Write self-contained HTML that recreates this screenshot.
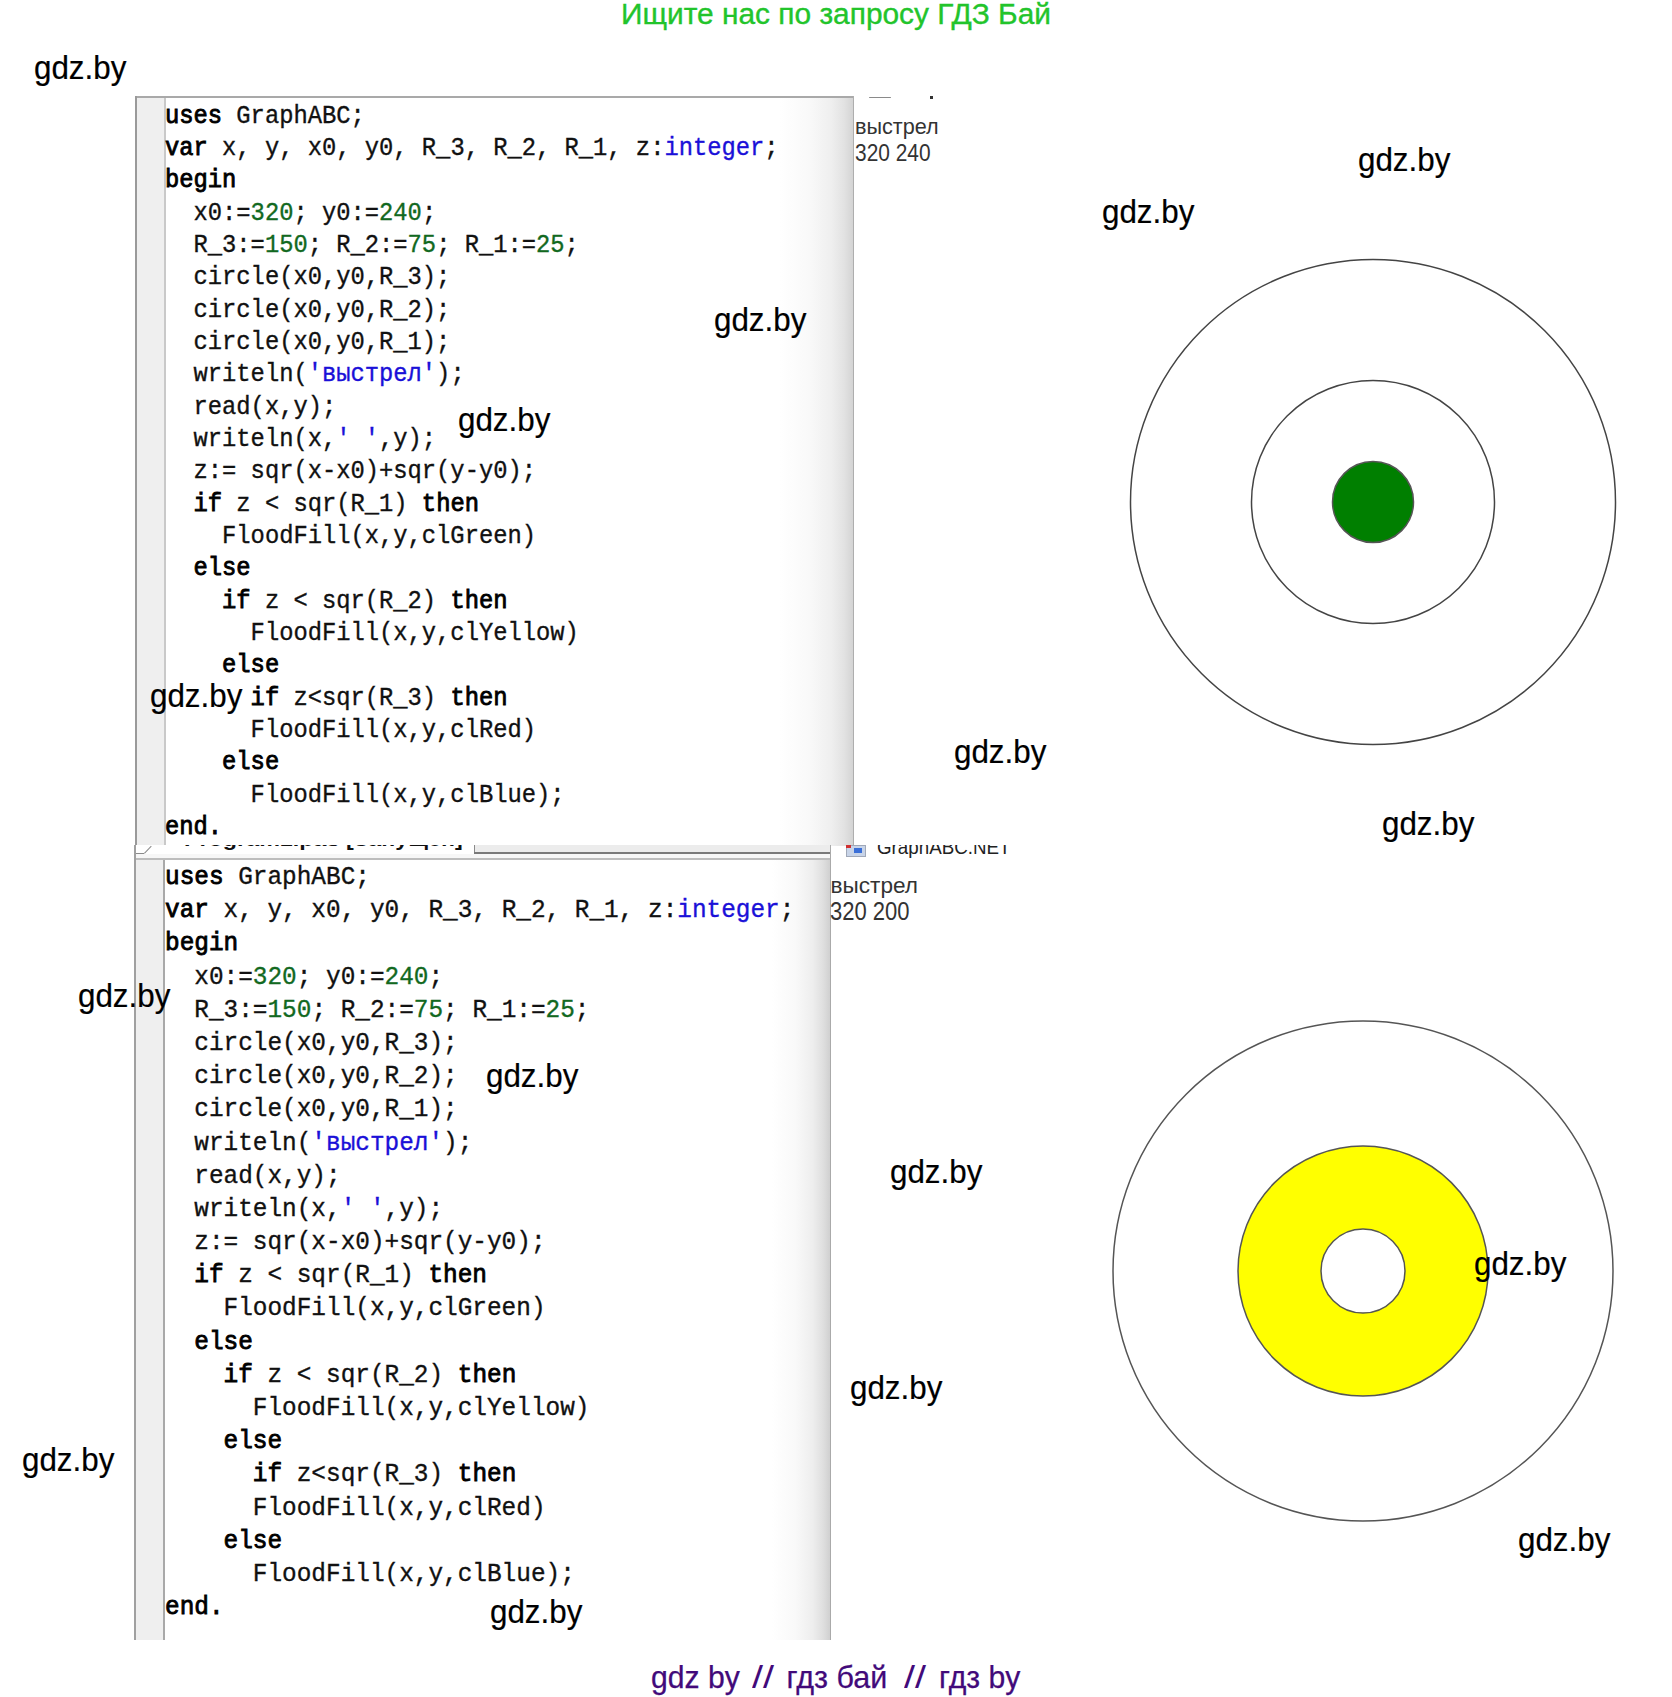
<!DOCTYPE html>
<html><head><meta charset="utf-8">
<style>
html,body{margin:0;padding:0;background:#fff;}
body{width:1672px;height:1697px;position:relative;overflow:hidden;font-family:"Liberation Sans",sans-serif;}
.abs{position:absolute;}
.wm{position:absolute;font-family:"Liberation Sans",sans-serif;font-size:33px;line-height:40px;color:#000;white-space:nowrap;transform-origin:0 0;transform:scaleX(0.95);-webkit-text-stroke:0.2px currentColor;}
.top{position:absolute;left:621px;top:-3.5px;font-size:29px;line-height:34px;color:#22c42b;white-space:nowrap;transform-origin:0 0;transform:scaleX(1.03);-webkit-text-stroke:0.35px currentColor;}
.bot{position:absolute;left:651px;top:1660px;font-size:30.5px;line-height:34px;color:#420a7a;white-space:nowrap;transform-origin:0 0;transform:scaleX(0.988);-webkit-text-stroke:0.25px currentColor;}
.panel{position:absolute;background:#fff;overflow:hidden;}
.gut{position:absolute;background:#efefef;}
.code{position:absolute;font-family:"Liberation Mono",monospace;white-space:normal;color:#111;transform-origin:0 0;-webkit-text-stroke:0.35px currentColor;}
.code b{font-weight:normal;-webkit-text-stroke:0.85px currentColor;color:#000;}
.code div{height:32.35px;white-space:pre;}
.p2 .code div{height:33.2px;}
b{font-weight:bold;}
.n{color:#12691f;}
.s{color:#1a10d8;}
.out{position:absolute;font-family:"Liberation Sans",sans-serif;color:#333;white-space:nowrap;transform-origin:0 0;}
</style></head><body>

<div class="top">Ищите нас по запросу ГДЗ Бай</div>

<!-- Panel 1 -->
<div class="panel p1" style="left:135px;top:96px;width:719px;height:750px;">
  <div class="abs" style="left:0;top:0;width:719px;height:2px;background:#a9a9a9;"></div>
  <div class="abs" style="left:0;top:0;width:2px;height:750px;background:#9a9a9a;"></div>
  <div class="gut" style="left:2px;top:2px;width:27px;height:748px;"></div>
  <div class="abs" style="left:29px;top:2px;width:1.5px;height:748px;background:#c9c9c9;"></div>
  <div class="abs" style="left:645px;top:2px;width:72.5px;height:748px;background:linear-gradient(to right,rgba(255,255,255,0),#f9f9f9 40%,#efefef 70%,#e2e2e2 88%,#d4d4d4);"></div>
  <div class="abs" style="left:717.5px;top:0;width:1.5px;height:750px;background:#aeaeae;"></div>
  <div class="code" style="left:30px;top:5.5px;font-size:25.2px;transform:scaleX(0.944);">
<div><b>uses</b> GraphABC;</div>
<div><b>var</b> x, y, x0, y0, R_3, R_2, R_1, z:<span class="s">integer</span>;</div>
<div><b>begin</b></div>
<div>  x0:=<span class="n">320</span>; y0:=<span class="n">240</span>;</div>
<div>  R_3:=<span class="n">150</span>; R_2:=<span class="n">75</span>; R_1:=<span class="n">25</span>;</div>
<div>  circle(x0,y0,R_3);</div>
<div>  circle(x0,y0,R_2);</div>
<div>  circle(x0,y0,R_1);</div>
<div>  writeln(<span class="s">'выстрел'</span>);</div>
<div>  read(x,y);</div>
<div>  writeln(x,<span class="s">' '</span>,y);</div>
<div>  z:= sqr(x-x0)+sqr(y-y0);</div>
<div>  <b>if</b> z &lt; sqr(R_1) <b>then</b></div>
<div>    FloodFill(x,y,clGreen)</div>
<div>  <b>else</b></div>
<div>    <b>if</b> z &lt; sqr(R_2) <b>then</b></div>
<div>      FloodFill(x,y,clYellow)</div>
<div>    <b>else</b></div>
<div>      <b>if</b> z&lt;sqr(R_3) <b>then</b></div>
<div>      FloodFill(x,y,clRed)</div>
<div>    <b>else</b></div>
<div>      FloodFill(x,y,clBlue);</div>
<div><b>end.</b></div>
  </div>
</div>

<!-- Panel 2 -->
<div class="panel p2" style="left:134px;top:845px;width:697px;height:795px;">
  <div class="abs" style="left:340px;top:0;width:357px;height:8px;background:#ececec;"></div>
  <div class="abs" style="left:340px;top:0;width:1.2px;height:8px;background:#8a8a8a;"></div>
  <div class="abs" style="left:340px;top:7px;width:357px;height:1.5px;background:#7a7a7a;"></div>
  <div class="abs" style="left:0;top:8.5px;width:696px;height:4.5px;background:#f7f7f7;"></div>
  <div class="abs" style="left:0;top:13px;width:696px;height:1.5px;background:#bdbdbd;"></div>
  <div class="abs" style="left:0.2px;top:0;width:1.7px;height:795px;background:#a0a0a0;"></div>
  <div class="abs" style="left:2px;top:7.8px;width:8px;height:1.3px;background:#8a8a8a;"></div>
  <div class="abs" style="left:9.6px;top:8.4px;width:10px;height:1.3px;background:#8a8a8a;transform:rotate(-46deg);transform-origin:0 0;"></div>
  <div class="abs" style="left:50px;top:-16.8px;height:25px;overflow:hidden;width:300px;">
    <div style="position:absolute;left:0;top:0;font-family:'Liberation Sans',sans-serif;font-weight:bold;font-size:21px;line-height:21px;color:#111;white-space:nowrap;transform:scaleX(1.11);transform-origin:0 0;">Program1.pas [Запущен]</div>
  </div>
  <div class="gut" style="left:1.9px;top:14.5px;width:27.5px;height:780px;"></div>
  <div class="abs" style="left:29.4px;top:14.5px;width:1.6px;height:780px;background:#a9a9a9;"></div>
  <div class="abs" style="left:638px;top:14.5px;width:57.5px;height:780px;background:linear-gradient(to right,rgba(255,255,255,0),#f9f9f9 40%,#eeeeee 70%,#dfdfdf 88%,#d0d0d0);"></div>
  <div class="abs" style="left:695.5px;top:0;width:1.5px;height:795px;background:#aaaaaa;"></div>
<div class="code" style="left:31px;top:17px;font-size:25.9px;transform:scaleX(0.942);">
<div><b>uses</b> GraphABC;</div>
<div><b>var</b> x, y, x0, y0, R_3, R_2, R_1, z:<span class="s">integer</span>;</div>
<div><b>begin</b></div>
<div>  x0:=<span class="n">320</span>; y0:=<span class="n">240</span>;</div>
<div>  R_3:=<span class="n">150</span>; R_2:=<span class="n">75</span>; R_1:=<span class="n">25</span>;</div>
<div>  circle(x0,y0,R_3);</div>
<div>  circle(x0,y0,R_2);</div>
<div>  circle(x0,y0,R_1);</div>
<div>  writeln(<span class="s">'выстрел'</span>);</div>
<div>  read(x,y);</div>
<div>  writeln(x,<span class="s">' '</span>,y);</div>
<div>  z:= sqr(x-x0)+sqr(y-y0);</div>
<div>  <b>if</b> z &lt; sqr(R_1) <b>then</b></div>
<div>    FloodFill(x,y,clGreen)</div>
<div>  <b>else</b></div>
<div>    <b>if</b> z &lt; sqr(R_2) <b>then</b></div>
<div>      FloodFill(x,y,clYellow)</div>
<div>    <b>else</b></div>
<div>      <b>if</b> z&lt;sqr(R_3) <b>then</b></div>
<div>      FloodFill(x,y,clRed)</div>
<div>    <b>else</b></div>
<div>      FloodFill(x,y,clBlue);</div>
<div><b>end.</b></div>
  </div>
</div>


<div class="abs" style="left:840px;top:845px;width:200px;height:14px;overflow:hidden;">
  <div class="abs" style="left:6px;top:0;width:18px;height:10px;background:#c8d4e8;border:1px solid #a0a8b8;"></div>
  <div class="abs" style="left:6px;top:0;width:5px;height:3px;background:#d03030;"></div>
  <div class="abs" style="left:14px;top:3px;width:8px;height:5px;background:#3a6fd8;"></div>
  <div style="position:absolute;left:37px;top:-8px;font-family:'Liberation Sans',sans-serif;font-size:20.5px;line-height:20px;color:#222;white-space:nowrap;transform:scaleX(0.915);transform-origin:0 0;">GraphABC.NET</div>
</div>
<div class="abs" style="left:869px;top:96.5px;width:22px;height:1.5px;background:#8a8a8a;border-radius:1px;"></div>
<div class="abs" style="left:930px;top:96px;width:3px;height:3px;background:#333;"></div>

<!-- outputs -->
<div class="out" style="left:854.5px;top:115.5px;font-size:22.3px;line-height:22px;transform:scaleX(0.97);">выстрел</div>
<div class="out" style="left:854.5px;top:139.5px;font-size:24.6px;line-height:25px;transform:scaleX(0.85);">320 240</div>
<div class="out" style="left:830.5px;top:874.5px;font-size:22.6px;line-height:22px;transform:scaleX(1.0);">выстрел</div>
<div class="out" style="left:830px;top:898px;font-size:25.6px;line-height:26px;transform:scaleX(0.86);">320 200</div>

<!-- circles -->
<svg class="abs" style="left:0;top:0;" width="1672" height="1697">
  <circle cx="1373" cy="502" r="242.5" fill="none" stroke="#444" stroke-width="1.5"/>
  <circle cx="1373" cy="502" r="121.5" fill="none" stroke="#444" stroke-width="1.5"/>
  <circle cx="1373" cy="502" r="40.5" fill="#007f00" stroke="#555" stroke-width="1.5"/>
  <circle cx="1363" cy="1271" r="250" fill="none" stroke="#555" stroke-width="1.5"/>
  <circle cx="1363" cy="1271" r="125" fill="#ffff00" stroke="#555" stroke-width="1.5"/>
  <circle cx="1363" cy="1271" r="42" fill="#fff" stroke="#555" stroke-width="1.5"/>
</svg>

<!-- watermarks -->
<div class="wm" style="left:33.5px;top:48.0px;">gdz.by</div>
<div class="wm" style="left:1357.5px;top:140.0px;">gdz.by</div>
<div class="wm" style="left:1101.5px;top:192.0px;">gdz.by</div>
<div class="wm" style="left:713.5px;top:300.0px;">gdz.by</div>
<div class="wm" style="left:457.5px;top:400.0px;">gdz.by</div>
<div class="wm" style="left:149.5px;top:676.0px;">gdz.by</div>
<div class="wm" style="left:953.5px;top:732.0px;">gdz.by</div>
<div class="wm" style="left:1381.5px;top:803.8px;">gdz.by</div>
<div class="wm" style="left:77.5px;top:976.2px;">gdz.by</div>
<div class="wm" style="left:485.5px;top:1056.0px;">gdz.by</div>
<div class="wm" style="left:889.5px;top:1152.2px;">gdz.by</div>
<div class="wm" style="left:1473.5px;top:1244.0px;">gdz.by</div>
<div class="wm" style="left:849.5px;top:1368.0px;">gdz.by</div>
<div class="wm" style="left:21.5px;top:1440.2px;">gdz.by</div>
<div class="wm" style="left:1517.5px;top:1520.0px;">gdz.by</div>
<div class="wm" style="left:489.5px;top:1592.3px;">gdz.by</div>

<div class="bot" style="left:651px;">gdz by</div>
<div class="bot" style="left:751.5px;transform:scaleX(1.3);-webkit-text-stroke:0;">//</div>
<div class="bot" style="left:786.5px;transform:scaleX(1.0);">гдз бай</div>
<div class="bot" style="left:903.5px;transform:scaleX(1.3);-webkit-text-stroke:0;">//</div>
<div class="bot" style="left:938.5px;">гдз by</div>

</body></html>
